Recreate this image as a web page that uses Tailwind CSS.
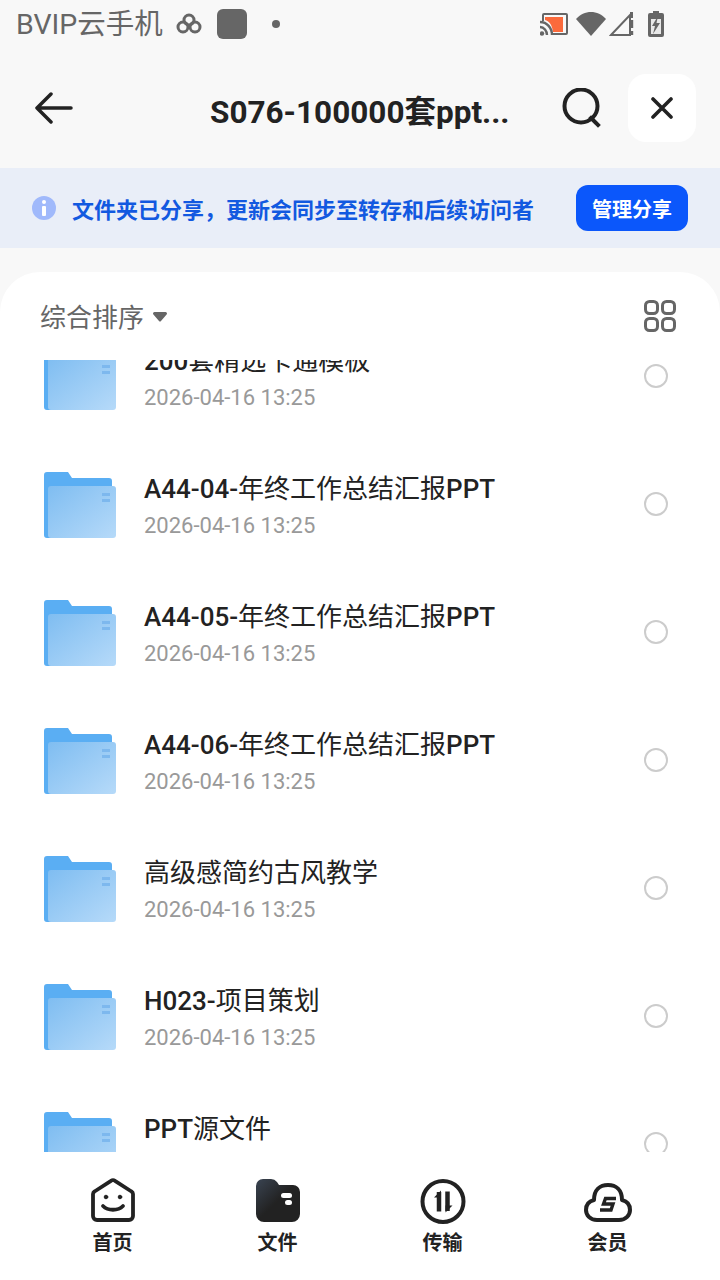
<!DOCTYPE html>
<html lang="zh-CN">
<head>
  <meta charset="UTF-8" />
  <meta name="viewport" content="width=device-width, initial-scale=1.0" />
  <title>S076-100000套ppt</title>
  <script src="https://cdn.jsdelivr.net/npm/@tailwindcss/browser@4"></script>
</head>
<body class="bg-[#f8f8f8] font-['Roboto','Noto_Sans_CJK_SC',sans-serif]">
<div class="w-[720px] h-[1280px] overflow-hidden flex flex-col">

  <!-- status bar -->
  <div class="h-[48px] shrink-0 flex items-center pl-[16px] text-[#666]">
    <span class="mt-[2px] text-[28.5px] leading-[48px] w-[146px] whitespace-nowrap">BVIP云手机</span>
    <svg class="ml-[14px]" width="26" height="22" viewBox="0 0 26 22" fill="none" stroke="#666" stroke-width="3"><circle cx="13" cy="7" r="5"/><circle cx="7" cy="14" r="5"/><circle cx="19" cy="14" r="5"/></svg>
    <div class="ml-[15px] w-[30px] h-[30px] rounded-[6px] bg-[#666]"></div>
    <div class="ml-[25px] w-[8px] h-[8px] rounded-full bg-[#666]"></div>
    <div class="ml-auto mr-[56px] flex items-center">
      <svg width="28" height="24" viewBox="0 0 28 24"><path d="M3 9V3a1 1 0 011-1h22a1 1 0 011 1v18a1 1 0 01-1 1H13" fill="none" stroke="#666" stroke-width="2"/><path d="M5 5h18v15H13C12 12 9 9 5 8z" fill="#fb6a3c"/><path d="M0 10c7 0 12 6 12 13M0 15c4 0 7 4 7 8" fill="none" stroke="#666" stroke-width="2.4"/><circle cx="2" cy="21.500" r="2.200" fill="#666"/></svg>
      <svg class="ml-[8px]" width="30" height="26" viewBox="0 0 30 26"><path d="M0 8C8 -1.500 22 -1.500 30 8L15 25z" fill="#666"/></svg>
      <svg class="ml-[3px]" width="25" height="26" viewBox="0 0 25 26"><path d="M2 24L21 4V24z" fill="none" stroke="#666" stroke-width="2"/><path d="M23 9v8M23 20v4" stroke="#666" stroke-width="2.400"/><path d="M21 1L24 1V7H21z" fill="#666"/></svg>
      <svg class="ml-[14px]" width="16" height="26" viewBox="0 0 16 26"><path d="M5 0h6v2h3a2 2 0 012 2v20a2 2 0 01-2 2H2a2 2 0 01-2-2V4a2 2 0 012-2h3z" fill="#666"/><path d="M3 8h10v15H3z" fill="#e8e8e8"/><path d="M10 5L4 15h3l-2 8 7-11H8.500z" fill="#666"/></svg>
    </div>
  </div>

  <!-- title bar -->
  <div class="h-[120px] shrink-0 relative flex items-center">
    <button class="ml-[35px] w-[38px] h-[32px]">
      <svg width="38" height="32" viewBox="0 0 38 32" fill="none" stroke="#222" stroke-width="3.500" stroke-linecap="round" stroke-linejoin="round"><path d="M2 16H36M16 2L2 16l14 14"/></svg>
    </button>
    <div class="ml-[137px] mt-[10px] w-[300px] text-[31.5px] leading-[40px] font-bold text-[#222] whitespace-nowrap">S076-100000套ppt...</div>
    <svg class="ml-[52px]" width="40" height="40" viewBox="0 0 40 40" fill="none" stroke="#222" stroke-width="4"><circle cx="19" cy="18" r="16.500"/><path d="M29 30l7 7" stroke-linecap="square"/></svg>
    <div class="ml-[26px] w-[68px] h-[68px] bg-white rounded-[18px] flex items-center justify-center">
      <svg width="22" height="22" viewBox="0 0 22 22" fill="none" stroke="#222" stroke-width="3.600" stroke-linecap="round"><path d="M2 2l18 18M20 2L2 20"/></svg>
    </div>
  </div>

  <!-- share notice -->
  <div class="h-[80px] shrink-0 bg-[#e9eef8] flex items-center pl-[32px] pr-[32px]">
    <div class="w-[24px] h-[24px] -mt-[1px] rounded-full bg-[#a0b9fb] flex flex-col items-center justify-center gap-[2px]">
      <div class="w-[4px] h-[4px] bg-white rounded-full"></div>
      <div class="w-[4px] h-[10px] bg-white rounded-[1px]"></div>
    </div>
    <div class="ml-[16px] mt-[5px] text-[22px] leading-[32px] font-bold text-[#1259e0] whitespace-nowrap">文件夹已分享，更新会同步至转存和后续访问者</div>
    <button class="ml-auto w-[112px] h-[46px] rounded-[12px] bg-[#0b57fb] text-white text-[20px] leading-[46px] pt-[2px] font-bold">管理分享</button>
  </div>

  <!-- sheet -->
  <div class="mt-[24px] flex-1 min-h-0 bg-white rounded-t-[40px] flex flex-col">
    <div class="h-[88px] shrink-0 flex items-center pl-[40px] pr-[44px]">
      <span class="mt-[4px] text-[26px] text-[#666] leading-[36px]">综合排序</span>
      <svg class="ml-[9px] mt-[2px]" width="14" height="10" viewBox="0 0 14 10"><path d="M1.500 0h11a1.500 1.500 0 011.100 2.500L8 9a1.400 1.400 0 01-2 0L.4 2.500A1.500 1.500 0 011.500 0z" fill="#666"/></svg>
      <svg class="ml-auto" width="32" height="32" viewBox="0 0 32 32" fill="none" stroke="#666" stroke-width="3"><rect x="1.500" y="1.500" width="12" height="12" rx="4"/><rect x="18.500" y="1.500" width="12" height="12" rx="4"/><rect x="1.500" y="18.500" width="12" height="12" rx="4"/><rect x="18.500" y="18.500" width="12" height="12" rx="4"/></svg>
    </div>

    <!-- file list, scrolled part way into the first row -->
    <div class="flex-1 min-h-0 overflow-hidden">
      <div class="-mt-[47px]">

        <div class="h-[128px] flex items-center pl-[44px] pr-[52px]">
          <svg width="72" height="66" viewBox="0 0 72 66" class="shrink-0"><defs><linearGradient id="f1" x1="0" y1="0" x2="1" y2="1"><stop offset="0" stop-color="#7fbdf1"/><stop offset="1" stop-color="#b6daf9"/></linearGradient></defs><path d="M0 3a3 3 0 013-3h21l4 6h37a3 3 0 013 3v54a3 3 0 01-3 3H3a3 3 0 01-3-3z" fill="#5aaef3"/><rect x="4" y="14" width="68" height="52" rx="3" fill="url(#f1)"/><path d="M58 21h8v3h-8zM58 27h8v3h-8z" fill="#7db8ee"/></svg>
          <div class="ml-[28px] mt-[4px] min-w-0 flex-1"><div class="-mt-[2px] text-[26px] leading-[36px] text-[#222]"><span class="font-medium">200</span>套精选卡通模板</div><div class="mt-[4px] text-[22px] leading-[30px] text-[#999]">2026-04-16 13:25</div></div>
          <div class="w-[24px] h-[24px] rounded-full border-2 border-[#ccc] -mt-[2px]"></div>
        </div>

        <div class="h-[128px] flex items-center pl-[44px] pr-[52px]">
          <svg width="72" height="66" viewBox="0 0 72 66" class="shrink-0"><defs><linearGradient id="f2" x1="0" y1="0" x2="1" y2="1"><stop offset="0" stop-color="#7fbdf1"/><stop offset="1" stop-color="#b6daf9"/></linearGradient></defs><path d="M0 3a3 3 0 013-3h21l4 6h37a3 3 0 013 3v54a3 3 0 01-3 3H3a3 3 0 01-3-3z" fill="#5aaef3"/><rect x="4" y="14" width="68" height="52" rx="3" fill="url(#f2)"/><path d="M58 21h8v3h-8zM58 27h8v3h-8z" fill="#7db8ee"/></svg>
          <div class="ml-[28px] mt-[4px] min-w-0 flex-1"><div class="-mt-[2px] text-[26px] leading-[36px] text-[#222]"><span class="font-medium">A44-04-</span>年终工作总结汇报<span class="font-medium">PPT</span></div><div class="mt-[4px] text-[22px] leading-[30px] text-[#999]">2026-04-16 13:25</div></div>
          <div class="w-[24px] h-[24px] rounded-full border-2 border-[#ccc] -mt-[2px]"></div>
        </div>

        <div class="h-[128px] flex items-center pl-[44px] pr-[52px]">
          <svg width="72" height="66" viewBox="0 0 72 66" class="shrink-0"><defs><linearGradient id="f3" x1="0" y1="0" x2="1" y2="1"><stop offset="0" stop-color="#7fbdf1"/><stop offset="1" stop-color="#b6daf9"/></linearGradient></defs><path d="M0 3a3 3 0 013-3h21l4 6h37a3 3 0 013 3v54a3 3 0 01-3 3H3a3 3 0 01-3-3z" fill="#5aaef3"/><rect x="4" y="14" width="68" height="52" rx="3" fill="url(#f3)"/><path d="M58 21h8v3h-8zM58 27h8v3h-8z" fill="#7db8ee"/></svg>
          <div class="ml-[28px] mt-[4px] min-w-0 flex-1"><div class="-mt-[2px] text-[26px] leading-[36px] text-[#222]"><span class="font-medium">A44-05-</span>年终工作总结汇报<span class="font-medium">PPT</span></div><div class="mt-[4px] text-[22px] leading-[30px] text-[#999]">2026-04-16 13:25</div></div>
          <div class="w-[24px] h-[24px] rounded-full border-2 border-[#ccc] -mt-[2px]"></div>
        </div>

        <div class="h-[128px] flex items-center pl-[44px] pr-[52px]">
          <svg width="72" height="66" viewBox="0 0 72 66" class="shrink-0"><defs><linearGradient id="f4" x1="0" y1="0" x2="1" y2="1"><stop offset="0" stop-color="#7fbdf1"/><stop offset="1" stop-color="#b6daf9"/></linearGradient></defs><path d="M0 3a3 3 0 013-3h21l4 6h37a3 3 0 013 3v54a3 3 0 01-3 3H3a3 3 0 01-3-3z" fill="#5aaef3"/><rect x="4" y="14" width="68" height="52" rx="3" fill="url(#f4)"/><path d="M58 21h8v3h-8zM58 27h8v3h-8z" fill="#7db8ee"/></svg>
          <div class="ml-[28px] mt-[4px] min-w-0 flex-1"><div class="-mt-[2px] text-[26px] leading-[36px] text-[#222]"><span class="font-medium">A44-06-</span>年终工作总结汇报<span class="font-medium">PPT</span></div><div class="mt-[4px] text-[22px] leading-[30px] text-[#999]">2026-04-16 13:25</div></div>
          <div class="w-[24px] h-[24px] rounded-full border-2 border-[#ccc] -mt-[2px]"></div>
        </div>

        <div class="h-[128px] flex items-center pl-[44px] pr-[52px]">
          <svg width="72" height="66" viewBox="0 0 72 66" class="shrink-0"><defs><linearGradient id="f5" x1="0" y1="0" x2="1" y2="1"><stop offset="0" stop-color="#7fbdf1"/><stop offset="1" stop-color="#b6daf9"/></linearGradient></defs><path d="M0 3a3 3 0 013-3h21l4 6h37a3 3 0 013 3v54a3 3 0 01-3 3H3a3 3 0 01-3-3z" fill="#5aaef3"/><rect x="4" y="14" width="68" height="52" rx="3" fill="url(#f5)"/><path d="M58 21h8v3h-8zM58 27h8v3h-8z" fill="#7db8ee"/></svg>
          <div class="ml-[28px] mt-[4px] min-w-0 flex-1"><div class="-mt-[2px] text-[26px] leading-[36px] text-[#222]">高级感简约古风教学</div><div class="mt-[4px] text-[22px] leading-[30px] text-[#999]">2026-04-16 13:25</div></div>
          <div class="w-[24px] h-[24px] rounded-full border-2 border-[#ccc] -mt-[2px]"></div>
        </div>

        <div class="h-[128px] flex items-center pl-[44px] pr-[52px]">
          <svg width="72" height="66" viewBox="0 0 72 66" class="shrink-0"><defs><linearGradient id="f6" x1="0" y1="0" x2="1" y2="1"><stop offset="0" stop-color="#7fbdf1"/><stop offset="1" stop-color="#b6daf9"/></linearGradient></defs><path d="M0 3a3 3 0 013-3h21l4 6h37a3 3 0 013 3v54a3 3 0 01-3 3H3a3 3 0 01-3-3z" fill="#5aaef3"/><rect x="4" y="14" width="68" height="52" rx="3" fill="url(#f6)"/><path d="M58 21h8v3h-8zM58 27h8v3h-8z" fill="#7db8ee"/></svg>
          <div class="ml-[28px] mt-[4px] min-w-0 flex-1"><div class="-mt-[2px] text-[26px] leading-[36px] text-[#222]"><span class="font-medium">H023-</span>项目策划</div><div class="mt-[4px] text-[22px] leading-[30px] text-[#999]">2026-04-16 13:25</div></div>
          <div class="w-[24px] h-[24px] rounded-full border-2 border-[#ccc] -mt-[2px]"></div>
        </div>

        <div class="h-[128px] flex items-center pl-[44px] pr-[52px]">
          <svg width="72" height="66" viewBox="0 0 72 66" class="shrink-0"><defs><linearGradient id="f7" x1="0" y1="0" x2="1" y2="1"><stop offset="0" stop-color="#7fbdf1"/><stop offset="1" stop-color="#b6daf9"/></linearGradient></defs><path d="M0 3a3 3 0 013-3h21l4 6h37a3 3 0 013 3v54a3 3 0 01-3 3H3a3 3 0 01-3-3z" fill="#5aaef3"/><rect x="4" y="14" width="68" height="52" rx="3" fill="url(#f7)"/><path d="M58 21h8v3h-8zM58 27h8v3h-8z" fill="#7db8ee"/></svg>
          <div class="ml-[28px] mt-[4px] min-w-0 flex-1"><div class="-mt-[2px] text-[26px] leading-[36px] text-[#222]"><span class="font-medium">PPT</span>源文件</div><div class="mt-[4px] text-[22px] leading-[30px] text-[#999]">2026-04-16 13:25</div></div>
          <div class="w-[24px] h-[24px] rounded-full border-2 border-[#ccc] -mt-[2px]"></div>
        </div>

      </div>
    </div>

    <!-- tab bar -->
    <div class="h-[128px] shrink-0 bg-white grid grid-cols-4 px-[30px] pt-[26px]">
      <div class="flex flex-col items-center">
        <svg width="44" height="44" viewBox="0 0 44 44" fill="none" stroke="#222" stroke-width="3.800" stroke-linejoin="round" stroke-linecap="round"><path d="M2 16a3 3 0 011.500-2.500L20 2.800a3.500 3.500 0 014 0l16.500 10.700A3 3 0 0142 16v22a4 4 0 01-4 4H6a4 4 0 01-4-4z"/><path d="M12 28c5 5 15 5 20 0"/><circle cx="15" cy="19" r="1.800" fill="#222" stroke-width="1"/><circle cx="29" cy="19" r="1.800" fill="#222" stroke-width="1"/></svg>
        <span class="mt-[7px] text-[20px] leading-[28px] font-bold text-[#222]">首页</span>
      </div>
      <div class="flex flex-col items-center">
        <svg width="46" height="44" viewBox="0 0 46 44"><defs><linearGradient id="tabfile" x1="0" y1="0" x2="1" y2="1"><stop offset="0" stop-color="#3a4452"/><stop offset="0.5" stop-color="#222"/></linearGradient></defs><path d="M1 8a7 7 0 017-7h8a8 8 0 016 3l2 3h14a7 7 0 017 7v22a8 8 0 01-8 8H9a8 8 0 01-8-8z" fill="url(#tabfile)" /><rect x="26" y="15" width="11" height="5" rx="2.500" fill="#fff"/><rect x="30" y="22" width="7" height="5" rx="2.500" fill="#fff"/></svg>
        <span class="mt-[7px] text-[20px] leading-[28px] font-bold text-[#222]">文件</span>
      </div>
      <div class="flex flex-col items-center">
        <svg width="46" height="46" viewBox="0 0 46 46" fill="none"><circle cx="23" cy="23.500" r="20.500" stroke="#222" stroke-width="4"/><path d="M19 33.500V14" stroke="#222" stroke-width="4.500"/><path d="M27.500 33V13.500" stroke="#222" stroke-width="4.500"/><path d="M21 12.500v7h-7z" fill="#222"/><path d="M25.500 34.500v-7h7z" fill="#222"/></svg>
        <span class="mt-[5px] text-[20px] leading-[28px] font-bold text-[#222]">传输</span>
      </div>
      <div class="flex flex-col items-center">
        <svg width="48" height="44" viewBox="0 0 48 44" fill="none"><path d="M13 42C6 42 2 37 2 32C2 26 6 23 10 22C10 12 16 7 24 7C32 7 38 12 38 22C42 23 46 26 46 32C46 37 42 42 35 42Z" stroke="#222" stroke-width="4" stroke-linejoin="round"/><path d="M32 20.500H21.500L19.500 26H29L27 32H16" stroke="#222" stroke-width="3.400"/></svg>
        <span class="mt-[7px] text-[20px] leading-[28px] font-bold text-[#222]">会员</span>
      </div>
    </div>
  </div>
</div>
</body>
</html>
